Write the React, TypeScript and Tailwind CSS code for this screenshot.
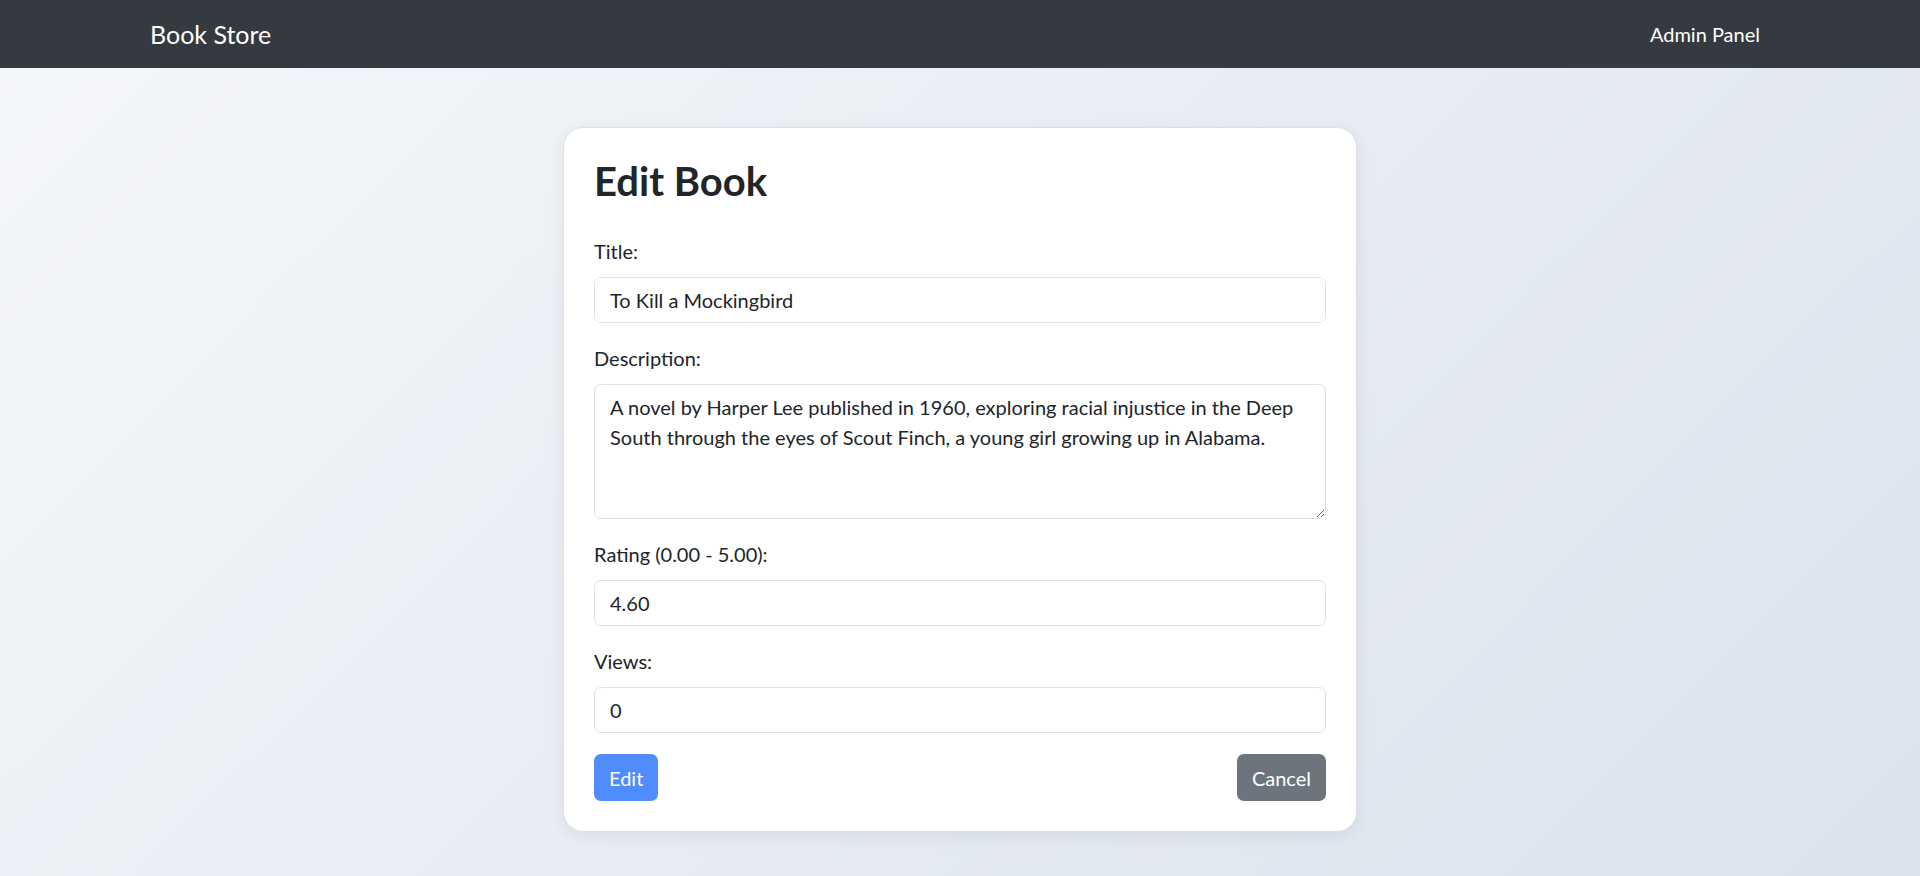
function Field({ label, value }: { label: string; value: string }) {
  return (
    <div className="mb-[21px]">
      <label className="mb-[11px] block text-[20px] leading-[29px] text-[#212529]">{label}</label>
      <input
        readOnly
        value={value}
        className="block h-[46px] w-full rounded-[7px] border border-[#dee2e6] bg-white px-[15px] text-[20px] text-[#212529] outline-none"
      />
    </div>
  );
}

export default function App() {
  return (
    <div className="relative min-h-screen bg-[linear-gradient(135deg,#f5f7fa_0%,#dce3ed_100%)] font-['Lato',sans-serif] text-[#212529]">
      <nav className="h-[68px] bg-[#343a40]">
        <div className="mx-auto flex h-full w-[1650px] items-center justify-between px-[15px]">
          <span className="text-[25px] leading-[37px] text-white">Book Store</span>
          <span className="px-[10px] text-[20px] leading-[30px] text-white">Admin Panel</span>
        </div>
      </nav>
      <div className="mx-auto mt-[59px] w-[794px] rounded-[20px] border border-[#dcdfe4] bg-white px-[30px] pt-[30px] pb-[30px] shadow-[0_4px_18px_rgba(0,0,0,0.07)]">
        <h2 className="mb-[33px] text-[40px] font-bold leading-[46px] text-[#212529]">Edit Book</h2>
        <Field label="Title:" value="To Kill a Mockingbird" />
        <div className="mb-[21px]">
          <label className="mb-[11px] block text-[20px] leading-[29px] text-[#212529]">Description:</label>
          <textarea
            readOnly
            value="A novel by Harper Lee published in 1960, exploring racial injustice in the Deep South through the eyes of Scout Finch, a young girl growing up in Alabama."
            className="block h-[135px] w-full rounded-[7px] border border-[#dee2e6] bg-white px-[15px] py-[7px] text-[20px] leading-[30px] text-[#212529] outline-none"
          />
        </div>
        <Field label="Rating (0.00 - 5.00):" value="4.60" />
        <Field label="Views:" value="0" />
        <div className="flex items-center justify-between">
          <button className="h-[47px] rounded-[7px] bg-[#4f8cfd] px-[15px] text-[20px] text-white">Edit</button>
          <button className="h-[47px] rounded-[7px] bg-[#6c757d] px-[15px] text-[20px] text-white">Cancel</button>
        </div>
      </div>
    </div>
  );
}
